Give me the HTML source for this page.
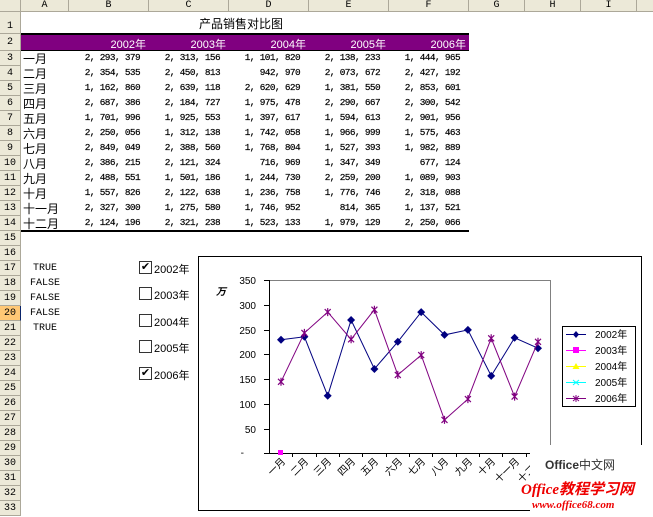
<!DOCTYPE html>
<html><head><meta charset="utf-8"><style>
body{margin:0;width:653px;height:516px;overflow:hidden;background:#fff;font-family:"Liberation Sans","Noto Sans CJK SC",sans-serif;position:relative}
.a{position:absolute}
.ch{position:absolute;top:0;height:12px;background:#ece9d8;border-right:1px solid #aca899;border-bottom:1px solid #aca899;font:10px "Liberation Mono",monospace;text-align:center;line-height:12px;color:#000;box-sizing:border-box}
.rh{position:absolute;left:0;width:21px;background:#ece9d8;border-right:1px solid #aca899;border-bottom:1px solid #aca899;font:10px "Liberation Mono",monospace;text-align:center;color:#000;box-sizing:border-box}
.n{position:absolute;font:9.4px "Liberation Mono","Noto Sans CJK SC",monospace;letter-spacing:-0.6px;text-align:right;width:80px;white-space:pre;-webkit-text-stroke:0.2px #000}
.m{position:absolute;left:23px;font:12px "Liberation Sans","Noto Sans CJK SC",sans-serif}
.t{position:absolute;font:10px "Liberation Mono",monospace;width:48px;text-align:center;left:21px}
.cb{position:absolute;left:139px;width:11px;height:11px;border:1px solid #333;background:#fff;font-size:11px;line-height:11px;text-align:center}
.cl{position:absolute;left:154px;font:11px "Liberation Sans","Noto Sans CJK SC",sans-serif}
</style></head><body>
<div class="ch" style="left:0;width:21px"></div>
<div class="ch" style="left:21px;width:48px">A</div>
<div class="ch" style="left:69px;width:80px">B</div>
<div class="ch" style="left:149px;width:80px">C</div>
<div class="ch" style="left:229px;width:80px">D</div>
<div class="ch" style="left:309px;width:80px">E</div>
<div class="ch" style="left:389px;width:80px">F</div>
<div class="ch" style="left:469px;width:56px">G</div>
<div class="ch" style="left:525px;width:56px">H</div>
<div class="ch" style="left:581px;width:56px">I</div>
<div class="ch" style="left:637px;width:20px"></div>

<div class="rh" style="top:12px;height:22px;line-height:30px">1</div>
<div class="rh" style="top:34px;height:17px;line-height:18px">2</div>
<div id="rows"></div>
<div class="a" style="left:199px;top:15px;font:12px 'Liberation Sans','Noto Sans CJK SC',sans-serif">产品销售对比图</div>
<div class="a" style="left:21px;top:33px;width:448px;height:2px;background:#000"></div>
<div class="a" style="left:21px;top:35px;width:448px;height:15px;background:#800080"></div>
<div class="a" style="left:21px;top:50px;width:448px;height:1px;background:#000"></div>
<div class="a" style="left:21px;top:230px;width:448px;height:2px;background:#000"></div>

<svg class="a" style="left:0;top:0" width="653" height="516" xmlns="http://www.w3.org/2000/svg" font-family="Liberation Sans,Noto Sans CJK SC,sans-serif">
<g fill="#fff" font-size="11" text-anchor="end">
<text x="146" y="48">2002年</text><text x="226" y="48">2003年</text><text x="306" y="48">2004年</text><text x="386" y="48">2005年</text><text x="466" y="48">2006年</text>
</g>
<rect x="198.5" y="256.5" width="443" height="254" fill="#fff" stroke="#000"/>
<path d="M269.5 280.5H550.5V453" fill="none" stroke="#808080"/>
<path d="M269.5 280V453.5H550" fill="none" stroke="#000"/>
<g stroke="#000"><path d="M264 280.5h5M264 305.5h5M264 330.5h5M264 354.5h5M264 379.5h5M264 404.5h5M264 429.5h5M264 453.5h5"/>
<path d="M292.5 453v4M316.5 453v4M339.5 453v4M362.5 453v4M386.5 453v4M409.5 453v4M432.5 453v4M456.5 453v4M479.5 453v4M502.5 453v4M526.5 453v4M550.5 453v4"/></g>
<g font-size="10" text-anchor="end"><text x="256" y="284">350</text><text x="256" y="309">300</text><text x="256" y="334">250</text><text x="256" y="358">200</text><text x="256" y="383">150</text><text x="256" y="408">100</text><text x="256" y="433">50</text><text x="244" y="456">-</text></g>
<text x="216" y="295" font-size="10" font-weight="bold" font-style="italic">万</text>
<g font-size="10" text-anchor="end">
<text transform="translate(286,462) rotate(-45)">一月</text><text transform="translate(309,462) rotate(-45)">二月</text><text transform="translate(332,462) rotate(-45)">三月</text><text transform="translate(356,462) rotate(-45)">四月</text><text transform="translate(379,462) rotate(-45)">五月</text><text transform="translate(403,462) rotate(-45)">六月</text><text transform="translate(426,462) rotate(-45)">七月</text><text transform="translate(449,462) rotate(-45)">八月</text><text transform="translate(473,462) rotate(-45)">九月</text><text transform="translate(496,462) rotate(-45)">十月</text><text transform="translate(520,462) rotate(-45)">十一月</text><text transform="translate(543,462) rotate(-45)">十二月</text>
</g>
<polyline fill="none" stroke="#000080" points="281,339.8 304.4,336.8 327.7,395.7 351.1,320 374.4,369 397.8,341.8 421.2,312.1 444.5,334.9 467.9,329.9 491.2,375.9 514.6,337.8 538,348.2"/>
<g fill="#000080">
<path d="M0-4L4 0 0 4-4 0Z" transform="translate(281,339.8)"/><path d="M0-4L4 0 0 4-4 0Z" transform="translate(304.4,336.8)"/><path d="M0-4L4 0 0 4-4 0Z" transform="translate(327.7,395.7)"/><path d="M0-4L4 0 0 4-4 0Z" transform="translate(351.1,320)"/><path d="M0-4L4 0 0 4-4 0Z" transform="translate(374.4,369)"/><path d="M0-4L4 0 0 4-4 0Z" transform="translate(397.8,341.8)"/><path d="M0-4L4 0 0 4-4 0Z" transform="translate(421.2,312.1)"/><path d="M0-4L4 0 0 4-4 0Z" transform="translate(444.5,334.9)"/><path d="M0-4L4 0 0 4-4 0Z" transform="translate(467.9,329.9)"/><path d="M0-4L4 0 0 4-4 0Z" transform="translate(491.2,375.9)"/><path d="M0-4L4 0 0 4-4 0Z" transform="translate(514.6,337.8)"/><path d="M0-4L4 0 0 4-4 0Z" transform="translate(538,348.2)"/></g>
<polyline fill="none" stroke="#800080" points="281,381.8 304.4,332.9 327.7,312.1 351.1,339.3 374.4,309.7 397.8,374.9 421.2,355.1 444.5,419.9 467.9,399.1 491.2,338.3 514.6,396.6 538,341.8"/>
<g stroke="#800080" stroke-width="1.2">
<path d="M-3-3L3 3M-3 3L3-3M0-4V4" transform="translate(281,381.8)"/><path d="M-3-3L3 3M-3 3L3-3M0-4V4" transform="translate(304.4,332.9)"/><path d="M-3-3L3 3M-3 3L3-3M0-4V4" transform="translate(327.7,312.1)"/><path d="M-3-3L3 3M-3 3L3-3M0-4V4" transform="translate(351.1,339.3)"/><path d="M-3-3L3 3M-3 3L3-3M0-4V4" transform="translate(374.4,309.7)"/><path d="M-3-3L3 3M-3 3L3-3M0-4V4" transform="translate(397.8,374.9)"/><path d="M-3-3L3 3M-3 3L3-3M0-4V4" transform="translate(421.2,355.1)"/><path d="M-3-3L3 3M-3 3L3-3M0-4V4" transform="translate(444.5,419.9)"/><path d="M-3-3L3 3M-3 3L3-3M0-4V4" transform="translate(467.9,399.1)"/><path d="M-3-3L3 3M-3 3L3-3M0-4V4" transform="translate(491.2,338.3)"/><path d="M-3-3L3 3M-3 3L3-3M0-4V4" transform="translate(514.6,396.6)"/><path d="M-3-3L3 3M-3 3L3-3M0-4V4" transform="translate(538,341.8)"/></g>
<rect x="278" y="450" width="5" height="5" fill="#f0f"/>
<rect x="562.5" y="326.5" width="73" height="80" fill="#fff" stroke="#000"/>
<g font-size="10">
<path d="M566 334.5h20" stroke="#000080"/><path d="M576 331l3 3.5-3 3.5-3-3.5z" fill="#000080"/><text x="595" y="338">2002年</text>
<path d="M566 350.5h20" stroke="#f0f"/><rect x="573" y="347" width="6" height="6" fill="#f0f"/><text x="595" y="354">2003年</text>
<path d="M566 366.5h20" stroke="#ff0"/><path d="M576 363l3.5 6h-7z" fill="#ff0"/><text x="595" y="370">2004年</text>
<path d="M566 382.5h20" stroke="#0ff"/><path d="M573 380l6 5M573 385l6-5" stroke="#0ff"/><text x="595" y="386">2005年</text>
<path d="M566 398.5h20" stroke="#800080"/><path d="M573 396l6 5M573 401l6-5M576 395v7" stroke="#800080"/><text x="595" y="402">2006年</text>
</g>
<rect x="530" y="445" width="123" height="71" fill="#fff"/>
<text x="545" y="469" font-size="12" font-weight="bold" fill="#333">Office<tspan font-weight="normal">中文网</tspan></text>
<text x="521" y="494" font-size="15" font-weight="bold" font-style="italic" fill="#e00" font-family="Liberation Serif,Noto Sans CJK SC,serif">Office教程学习网</text>
<text x="532" y="508" font-size="11" font-weight="bold" font-style="italic" fill="#e00" font-family="Liberation Serif,serif">www.office68.com</text>
</svg>

<div class="cb" style="top:261px">✔</div><div class="cl" style="top:261px">2002年</div>
<div class="cb" style="top:287px"></div><div class="cl" style="top:287px">2003年</div>
<div class="cb" style="top:314px"></div><div class="cl" style="top:314px">2004年</div>
<div class="cb" style="top:340px"></div><div class="cl" style="top:340px">2005年</div>
<div class="cb" style="top:367px">✔</div><div class="cl" style="top:367px">2006年</div>

<script>
var d=[["一月","2, 293, 379","2, 313, 156","1, 101, 820","2, 138, 233","1, 444, 965"],
["二月","2, 354, 535","2, 450, 813","942, 970","2, 073, 672","2, 427, 192"],
["三月","1, 162, 860","2, 639, 118","2, 620, 629","1, 381, 550","2, 853, 601"],
["四月","2, 687, 386","2, 184, 727","1, 975, 478","2, 290, 667","2, 300, 542"],
["五月","1, 701, 996","1, 925, 553","1, 397, 617","1, 594, 613","2, 901, 956"],
["六月","2, 250, 056","1, 312, 138","1, 742, 058","1, 966, 999","1, 575, 463"],
["七月","2, 849, 049","2, 388, 560","1, 768, 804","1, 527, 393","1, 982, 889"],
["八月","2, 386, 215","2, 121, 324","716, 969","1, 347, 349","677, 124"],
["九月","2, 488, 551","1, 501, 186","1, 244, 730","2, 259, 200","1, 089, 903"],
["十月","1, 557, 826","2, 122, 638","1, 236, 758","1, 776, 746","2, 318, 088"],
["十一月","2, 327, 300","1, 275, 580","1, 746, 952","814, 365","1, 137, 521"],
["十二月","2, 124, 196","2, 321, 238","1, 523, 133","1, 979, 129","2, 250, 066"]];
var h="",tf={17:"TRUE",18:"FALSE",19:"FALSE",20:"FALSE",21:"TRUE"};
for(var r=3;r<=33;r++){var y=51+(r-3)*15;
h+='<div class="rh" style="top:'+y+'px;height:15px;line-height:16px;'+(r==20?'background:#ffc875;border-right:1px solid #0a246a':'')+'">'+r+'</div>';
if(r<=14){var row=d[r-3];h+='<div class="m" style="top:'+(y-1)+'px">'+row[0]+'</div>';
for(var c=1;c<6;c++)h+='<div class="n" style="left:'+(60+80*(c-1))+'px;top:'+(y+1)+'px">'+row[c]+'</div>';}
if(tf[r])h+='<div class="t" style="top:'+(y+2)+'px">'+tf[r]+'</div>';}
document.getElementById("rows").innerHTML=h;
</script>
</body></html>
